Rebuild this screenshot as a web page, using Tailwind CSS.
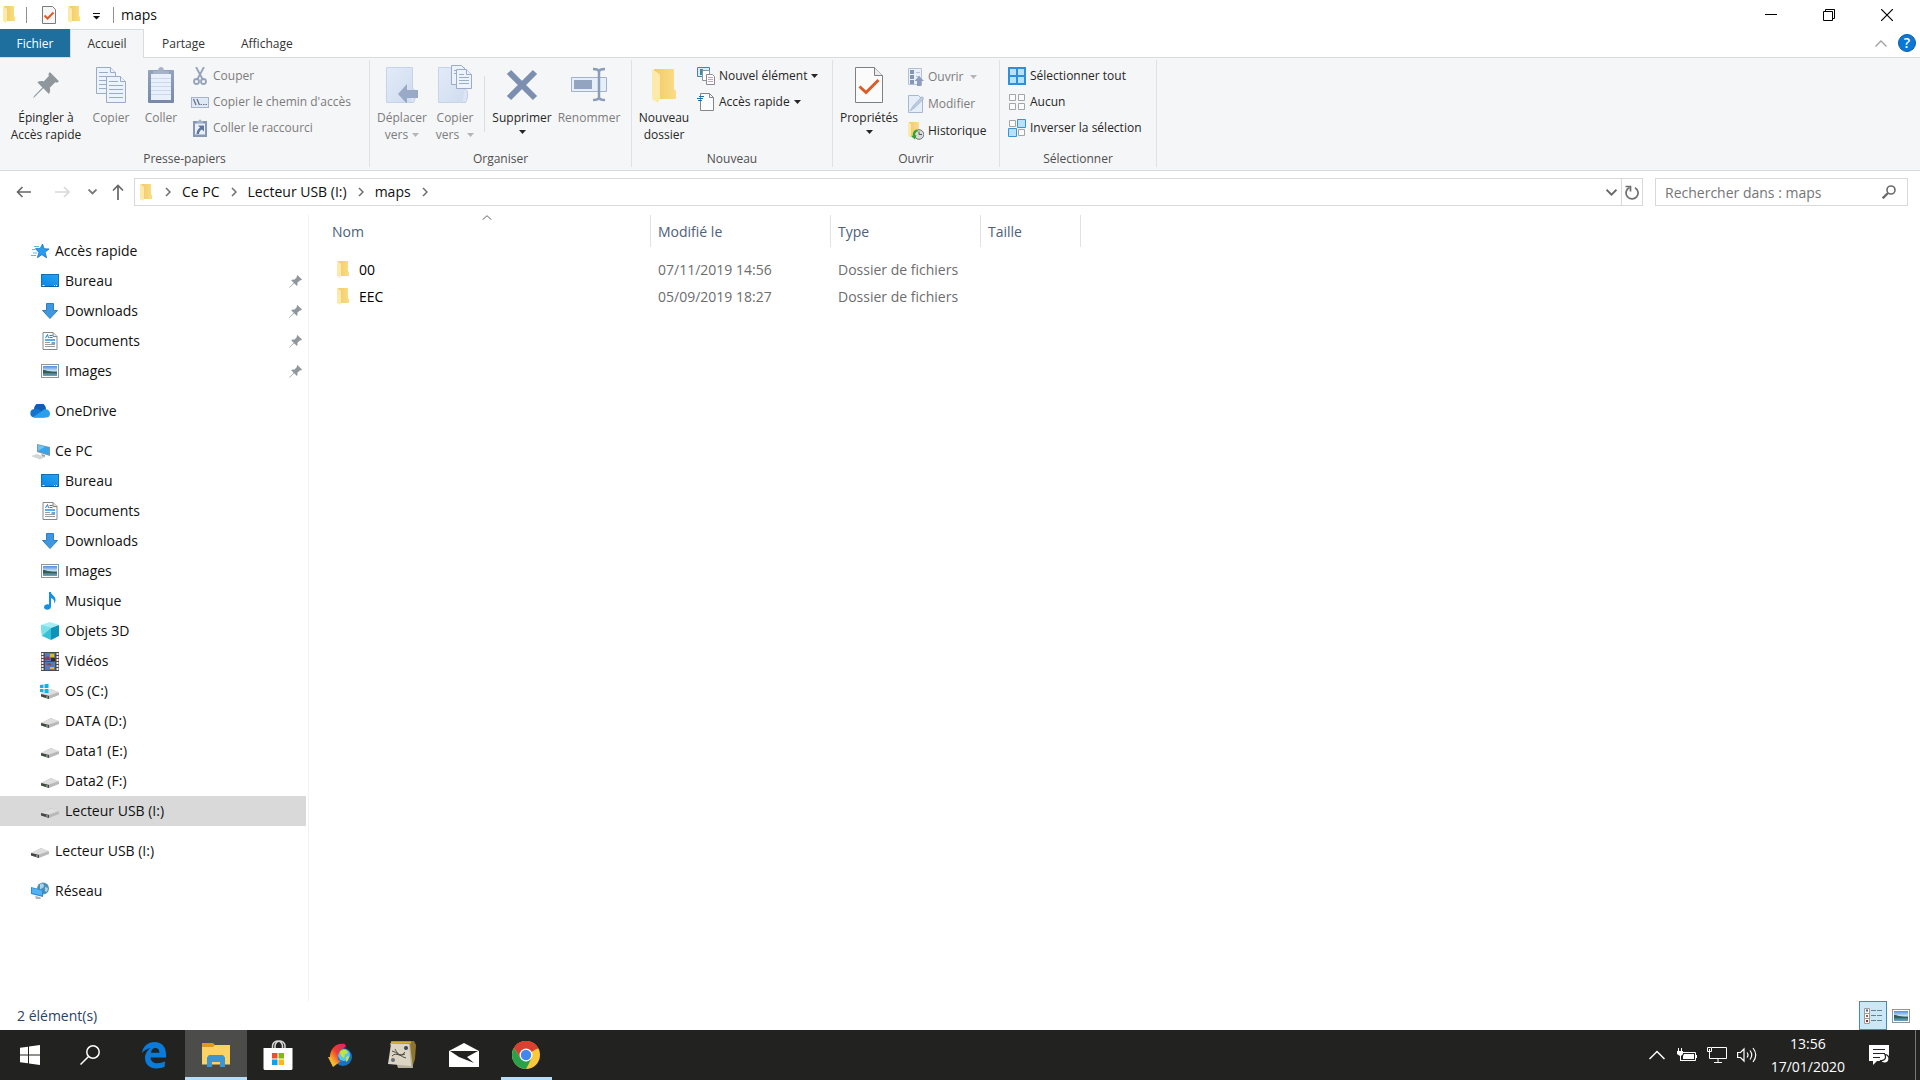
<!DOCTYPE html>
<html lang="fr">
  <head>
    <meta charset="UTF-8" />
    <meta name="viewport" content="width=device-width, initial-scale=1.0" />
    <script src="https://cdn.jsdelivr.net/npm/@tailwindcss/browser@4"></script>
    <title>maps</title>
  </head>
  <body class="flex min-h-screen flex-col bg-white font-['Open_Sans','Noto_Sans',sans-serif] text-sm text-[#111]">
    <!-- shared icons -->
    <svg class="absolute h-0 w-0" aria-hidden="true">
      <defs>
        <linearGradient id="gFolder" x1="0" x2="1"><stop offset="0" stop-color="#f0ca68" /><stop offset="1" stop-color="#fbdd85" /></linearGradient>
        <linearGradient id="gBlue" x1="0" y1="1" x2="1" y2="0"><stop offset="0" stop-color="#0a84e4" /><stop offset="1" stop-color="#22a6fb" /></linearGradient>
        <linearGradient id="gSky" x1="0" y1="0" x2="0" y2="1"><stop offset="0" stop-color="#4c8fe0" /><stop offset="0.5" stop-color="#cfe6f7" /><stop offset="0.6" stop-color="#3c6b62" /><stop offset="1" stop-color="#6ea3c9" /></linearGradient>
        <linearGradient id="gSteel" x1="0" y1="0" x2="0" y2="1"><stop offset="0" stop-color="#93a2bd" /><stop offset="1" stop-color="#7888a8" /></linearGradient>
        <linearGradient id="gPage" x1="0" y1="0" x2="1" y2="1"><stop offset="0" stop-color="#e3ebf8" /><stop offset="1" stop-color="#cfdcef" /></linearGradient>
        <linearGradient id="gArrow" x1="1" y1="0" x2="0" y2="1"><stop offset="0" stop-color="#d6246e" /><stop offset="0.45" stop-color="#ee3d2d" /><stop offset="0.75" stop-color="#f9b32a" /><stop offset="1" stop-color="#c4ec4c" /></linearGradient>
      </defs>
      <symbol id="folder" viewBox="0 0 12 17">
        <path d="M1 0h10v10l1 1v4H3z" fill="url(#gFolder)" />
        <path d="M0 0l3 2c1 .6 1 1 1 2v11l-1 2-3-2z" fill="#fde9a9" />
      </symbol>
      <symbol id="pin" viewBox="0 0 24 24">
        <path d="M15.500 0L24 8.500l-2 1.500-1.500-.5-5 5c.6 2.400.3 4.300-.8 5.800L9.500 15 1.500 23 0 24l1-1.800 7.700-7.900L4 9.500c1.700-1.200 3.700-1.400 5.800-.8l4.900-5-.5-1.700z" fill="#8f979d" />
      </symbol>
      <symbol id="desktop" viewBox="0 0 18 14">
        <rect x=".5" y=".5" width="17" height="12" fill="url(#gBlue)" stroke="#1170ba" />
        <path d="M1 12.500h16" stroke="#0b5fa5" /><path d="M1.500 11.500h2M13 11.500h1M15 11.500h1" stroke="#fff" />
      </symbol>
      <symbol id="download" viewBox="0 0 16 16">
        <path d="M4.500.5h7v7h4L8 15.500.5 7.500h4z" fill="#3f97e0" stroke="#2c7fc6" />
      </symbol>
      <symbol id="document" viewBox="0 0 15 18">
        <path d="M.5.500h10l4 4v13H.5z" fill="#fdfdfd" stroke="#85888b" /><path d="M10.500.5v4h4" fill="#dfe1e3" stroke="#85888b" />
        <path d="M3 6l2-3.500L6 6M7 3.500h3M7 5.500h3" stroke="#2a7fc4" fill="none" />
        <path d="M2.500 8h10M9 11h3.500" stroke="#2390e2" stroke-width="1.500" /><path d="M2.500 10.500h5M2.500 12.500h10M2.500 14.500h10" stroke="#9a9da0" />
      </symbol>
      <symbol id="picture" viewBox="0 0 18 14">
        <rect x=".5" y=".5" width="17" height="13" fill="#fff" stroke="#8d969e" />
        <rect x="2" y="2" width="14" height="10" fill="url(#gSky)" /><path d="M2 6c4 0 5 2 14 2v1H2z" fill="#335f55" />
      </symbol>
      <symbol id="drive" viewBox="0 0 18 10">
        <path d="M0 5l10-5 8 3.500V6L8 10 0 7.500z" fill="#b9b9b9" /><path d="M0 5l10-4.800L18 3 8 6.500z" fill="#dedede" />
        <path d="M0 5l8 2v3L0 7.500z" fill="#454745" /><path d="M5 8h2" stroke="#9fd29a" />
      </symbol>
      <symbol id="crumb" viewBox="0 0 6 10"><path d="M1 1l4 4-4 4" fill="none" stroke="#6d6d6d" stroke-width="1.500" /></symbol>
      <symbol id="caret" viewBox="0 0 7 4"><path d="M0 0h7L3.500 4z" fill="currentColor" /></symbol>
      <symbol id="check" viewBox="0 0 28 36">
        <path d="M.5.500h19l8 8v27H.5z" fill="#fbfbfb" stroke="#7f8285" /><path d="M19.500.5v8h8" fill="#e9ebec" stroke="#7f8285" />
        <path d="M4.500 19.500l6.500 6L23.500 13" fill="none" stroke="#df5b26" stroke-width="3" />
      </symbol>
    </svg>

    <!-- title bar -->
    <header class="flex h-[29px] items-center">
      <svg class="ml-[3px] h-[17px] w-3"><use href="#folder" /></svg>
      <span class="ml-[11px] h-4 w-px bg-[#8f8f8f]"></span>
      <button class="ml-[15px]" aria-label="Propriétés">
        <svg class="h-[18px] w-[14px]" viewBox="0 0 14 18"><path d="M.5.500h10l3 3v14H.5z" fill="#f6f6f6" stroke="#777b80" /><path d="M2.500 9.500l3 3 6-6" fill="none" stroke="#df5b26" stroke-width="2" /></svg>
      </button>
      <button class="ml-3" aria-label="Nouveau dossier"><svg class="h-[17px] w-3"><use href="#folder" /></svg></button>
      <button class="ml-[13px]" aria-label="Personnaliser"><svg class="mt-1 h-[7px] w-[7px]" viewBox="0 0 7 7"><path d="M0 .5h7" stroke="#111" /><path d="M0 3h7L3.500 6.500z" fill="#111" /></svg></button>
      <span class="ml-[13px] h-4 w-px bg-[#8f8f8f]"></span>
      <h1 class="ml-[7px]">maps</h1>
      <div class="ml-auto flex">
        <button class="flex h-[29px] w-[58px] items-center justify-center" aria-label="Réduire"><svg class="h-3 w-3" viewBox="0 0 12 12"><path d="M0 5.500h12" stroke="#000" /></svg></button>
        <button class="flex h-[29px] w-[58px] items-center justify-center" aria-label="Restaurer"><svg class="h-3 w-3" viewBox="0 0 12 12"><path d="M.5 2.500h9v9h-9zM2.500 2.500v-2h9v9h-2" fill="none" stroke="#000" /></svg></button>
        <button class="mr-1 flex h-[29px] w-[58px] items-center justify-center" aria-label="Fermer"><svg class="h-3 w-3" viewBox="0 0 12 12"><path d="M0 0l12 12M12 0L0 12" stroke="#000" stroke-width="1.200" /></svg></button>
      </div>
    </header>

    <!-- tabs -->
    <nav class="flex h-7 text-xs text-[#333]">
      <button class="w-[70px] bg-[#1e6e9e] pt-0.5 text-white">Fichier</button>
      <button class="relative -mb-px w-[74px] border border-b-0 border-[#dadbdc] bg-[#f5f6f7]">Accueil</button>
      <button class="px-[18px] pt-0.5">Partage</button>
      <button class="px-[18px] pt-0.5">Affichage</button>
      <button class="ml-auto" aria-label="Réduire le ruban"><svg class="h-[7px] w-3" viewBox="0 0 12 7"><path d="M.5 6.500L6 1l5.500 5.500" fill="none" stroke="#a0a0a0" stroke-width="1.300" /></svg></button>
      <button class="mr-1 ml-[11px] flex h-[18px] w-[18px] items-center justify-center self-center rounded-full border border-[#0a5ea8] bg-[#0b77d6] text-sm font-semibold text-white" aria-label="Aide">?</button>
    </nav>

    <!-- ribbon -->
    <section class="flex h-[114px] border-y border-[#dadbdc] bg-[#f5f6f7] pt-0.5 pb-[3px] text-xs text-[#262626]">
      <div class="flex w-[370px] flex-col border-r border-[#e0e1e3]">
        <div class="flex flex-1 pl-[5px]">
          <button class="flex w-[82px] flex-col items-center leading-[17px]">
            <svg class="mt-3 mb-[11px] h-[26px] w-[26px]"><use href="#pin" /></svg>Épingler à<br />Accès rapide
          </button>
          <button class="flex w-12 flex-col items-center leading-[17px] text-[#7c7c7c]" disabled>
            <svg class="mt-[7px] mb-[6px] h-9 w-[30px]" viewBox="0 0 30 36">
              <g fill="#edf3fc" stroke="#9aabc8">
                <path d="M.5.500h14l5 5v21H.5z" /><path d="M14.500.5v5h5M3 5.500h9M3 9.500h14M3 13.500h14M3 17.500h14M3 21.500h14" />
                <path d="M10.500 9.500h14l5 5v21h-19z" /><path d="M24.500 9.500v5h5M13 14.500h9M13 18.500h14M13 22.500h14M13 26.500h14M13 30.500h14" />
              </g>
            </svg>Copier
          </button>
          <button class="flex w-[52px] flex-col items-center leading-[17px] text-[#7c7c7c]" disabled>
            <svg class="mt-[7px] mb-[6px] h-9 w-[26px]" viewBox="0 0 26 36">
              <rect y="3" width="26" height="33" rx="1" fill="url(#gSteel)" /><path d="M3 7h20v26H3z" fill="#e8f0fb" />
              <path d="M3 11.500h20M3 15.500h20M3 19.500h20M3 23.500h20M3 27.500h20" stroke="#cbd7ea" />
              <path d="M5 7V4h5a3 3 0 016 0h5v3z" fill="#a6b2c8" /><circle cx="13" cy="2.500" r="2.500" fill="#a6b2c8" />
            </svg>Coller
          </button>
          <div class="ml-1 flex flex-col pt-[3px] text-[#7c7c7c]">
            <button class="flex h-[26px] items-center gap-1" disabled>
              <svg class="h-[18px] w-[18px]" viewBox="0 0 18 18" fill="none" stroke="#94a2bc" stroke-width="1.800"><path d="M5 0l6.500 12M13 0L6.500 12" /><circle cx="5.500" cy="14.500" r="2.500" /><circle cx="12.500" cy="14.500" r="2.500" /></svg>Couper
            </button>
            <button class="flex h-[26px] items-center gap-1" disabled>
              <svg class="h-[18px] w-[18px]" viewBox="0 0 18 18"><rect x=".5" y="4.500" width="17" height="10" fill="#dfe8f5" stroke="#a5b3cb" /><path d="M2.500 6l2.500 6M6 6l2.500 6" stroke="#67738c" stroke-width="1.300" /><path d="M9.500 11.500h1.500M12 11.500h1.500M14.500 11.500H16" stroke="#67738c" /></svg>Copier le chemin d'accès
            </button>
            <button class="flex h-[26px] items-center gap-1" disabled>
              <svg class="h-[18px] w-[18px]" viewBox="0 0 18 18"><path d="M2 2h14v16H2z" fill="#8798b6" /><path d="M4 4.500h10v11H4z" fill="#eaf1fb" /><path d="M6 4V2h1.500a1.500 1.500 0 013 0H12v2z" fill="#a6b2c8" /><path d="M7 6.500h6v6l-2-2c-2 1-3 2.500-3 4.500H5.500c0-3 1.500-5 3.500-6.500z" fill="#60759c" /></svg>Coller le raccourci
            </button>
          </div>
        </div>
        <div class="h-4 text-center text-[#4f4f4f]">Presse-papiers</div>
      </div>

      <div class="flex w-[262px] flex-col border-r border-[#e0e1e3]">
        <div class="flex flex-1 pl-[3px]">
          <button class="flex w-[58px] flex-col items-center leading-[17px] text-[#7c7c7c]" disabled>
            <svg class="mt-[7px] mb-[6px] h-9 w-8" viewBox="0 0 32 36">
              <path d="M.5.500h26v35H.5z" fill="url(#gPage)" stroke="#c6d4ea" /><path d="M26.500 22c4 0 4 8 1 13.500h-3" fill="#dbe5f4" stroke="#c0cfe6" />
              <path d="M12 27l9-10v6h11v8H21v6z" fill="#9aa9c5" />
            </svg>Déplacer
            <span class="flex items-center gap-1">vers<svg class="h-1 w-[7px] text-[#b5b5b5]"><use href="#caret" /></svg></span>
          </button>
          <button class="flex w-12 flex-col items-center leading-[17px] text-[#7c7c7c]" disabled>
            <svg class="mt-[5px] mb-[6px] h-[38px] w-[34px]" viewBox="0 0 34 38">
              <path d="M.5 2.500h26v35H.5z" fill="url(#gPage)" stroke="#c6d4ea" /><path d="M26.500 24c4 0 4 8 1 13.500h-3" fill="#dbe5f4" stroke="#c0cfe6" />
              <g fill="#edf3fc" stroke="#9aabc8"><path d="M13.500.5h10l4 4v15h-14zM16 5.500h8M16 8.500h8" /><path d="M18.500 4.500h10l5 5v14h-15z" /><path d="M28.500 4.500v5h5M21 9.500h5M21 12.500h10M21 15.500h10M21 18.500h10" /></g>
            </svg>Copier
            <span class="flex items-center gap-2">vers<svg class="h-1 w-[7px] text-[#b5b5b5]"><use href="#caret" /></svg></span>
          </button>
          <span class="mx-[5px] mt-4 h-14 w-px bg-[#dcdde0]"></span>
          <button class="flex w-16 flex-col items-center leading-[17px]">
            <svg class="mt-[9px] mb-2 h-8 w-8" viewBox="0 0 32 32"><path d="M3 3l26 26M29 3L3 29" stroke="#7d8fb0" stroke-width="6" /></svg>Supprimer
            <svg class="mt-1 h-1 w-[7px]"><use href="#caret" /></svg>
          </button>
          <button class="flex w-[70px] flex-col items-center leading-[17px] text-[#7c7c7c]" disabled>
            <svg class="mt-[7px] mb-[6px] h-9 w-9" viewBox="0 0 36 36"><path d="M.5 10.500h35v14H.5z" fill="#e6eefa" stroke="#a2b1cc" /><path d="M3 13h18v9H3z" fill="#93a4c1" /><path d="M22 2c3 0 6 0 6 3v25c0 3-3 3-6 3M34 2c-3 0-6 0-6 3v25c0 3 3 3 6 3" fill="none" stroke="#8b9cba" stroke-width="2.500" /></svg>Renommer
          </button>
        </div>
        <div class="h-4 text-center text-[#4f4f4f]">Organiser</div>
      </div>

      <div class="flex w-[201px] flex-col border-r border-[#e0e1e3]">
        <div class="flex flex-1 pl-[3px]">
          <button class="flex w-[58px] flex-col items-center leading-[17px]">
            <svg class="mt-[9px] mb-[6px] h-[34px] w-6"><use href="#folder" /></svg>Nouveau<br />dossier
          </button>
          <div class="ml-1 flex flex-col pt-[3px]">
            <button class="flex h-[26px] items-center gap-1">
              <svg class="h-[18px] w-[18px]" viewBox="0 0 18 18"><path d="M.5.500h12v9H.5z" fill="#d6edf8" stroke="#4686a8" /><path d="M3 2h3v6H3z" fill="#3f8aa8" /><path d="M5.500 3.500h7v10h-7z" fill="#fff" stroke="#8795a2" /><path d="M9.500 7.500h6l2 2v8h-8z" fill="#fff" stroke="#8b8b98" /><path d="M11 10.500h5M11 12.500h5M11 14.500h5" stroke="#c8a5b0" /></svg>Nouvel élément<svg class="h-1 w-[7px]"><use href="#caret" /></svg>
            </button>
            <button class="flex h-[26px] items-center gap-1">
              <svg class="h-[18px] w-[18px]" viewBox="0 0 18 18"><path d="M3.500.5h9l4 4v13h-13z" fill="#fcfcfc" stroke="#84878a" /><path d="M12.500.5v4h4" fill="none" stroke="#84878a" /><path d="M2 3.500h5M0 5.500h6M1 7.500h4" stroke="#1e70a8" stroke-width="1.200" /></svg>Accès rapide<svg class="h-1 w-[7px]"><use href="#caret" /></svg>
            </button>
          </div>
        </div>
        <div class="h-4 text-center text-[#4f4f4f]">Nouveau</div>
      </div>

      <div class="flex w-[167px] flex-col border-r border-[#e0e1e3]">
        <div class="flex flex-1 pl-[3px]">
          <button class="flex w-[66px] flex-col items-center leading-[17px]">
            <svg class="mt-[7px] mb-[6px] h-9 w-7"><use href="#check" /></svg>Propriétés
            <svg class="mt-1 h-1 w-[7px]"><use href="#caret" /></svg>
          </button>
          <div class="ml-[6px] flex flex-col pt-[3px]">
            <button class="flex h-[27px] items-center gap-1 text-[#7c7c7c]" disabled>
              <svg class="h-[18px] w-4" viewBox="0 0 16 18"><path d="M.5.500h13v16H.5z" fill="#e9f0fa" stroke="#b3c1d8" /><path d="M2 2h4v4H2zM2 7h4v4H2zM2 12h4v4H2z" fill="#8496b5" /><path d="M8 4.500h4M8 8.500h4" stroke="#b7c4da" /><path d="M6.500 13L11 8l5 5h-2.500v5H9v-5z" fill="#8d9dbb" /></svg>Ouvrir<svg class="ml-0.5 h-1 w-[7px] text-[#b5b5b5]"><use href="#caret" /></svg>
            </button>
            <button class="flex h-[27px] items-center gap-1 text-[#7c7c7c]" disabled>
              <svg class="h-[18px] w-4" viewBox="0 0 16 18"><path d="M.5.500h10l4 4v13H.5z" fill="#e6eefa" stroke="#a8b7d0" /><path d="M2 16l3-5L14 1.500l2 2-9 9z" fill="#bccbe1" stroke="#a1b1cb" stroke-width=".7" /></svg>Modifier
            </button>
            <button class="flex h-[27px] items-center gap-1">
              <svg class="h-[18px] w-4" viewBox="0 0 16 18"><path d="M1 0h10v14H3z" fill="url(#gFolder)" /><path d="M0 0l3 2v14l-3-2z" fill="#fde9a9" /><circle cx="11" cy="12.500" r="4.800" fill="#d8dadb" stroke="#6f7376" /><path d="M11 9.500v3h3" fill="none" stroke="#555" /><path d="M9 7.500c-3 .5-4.500 3-4 6l-2 .5 4 3.500 1.500-4.500-1.500.3c0-2 1-3.500 3-4z" fill="#2fa62b" /></svg>Historique
            </button>
          </div>
        </div>
        <div class="h-4 text-center text-[#4f4f4f]">Ouvrir</div>
      </div>

      <div class="flex w-[157px] flex-col border-r border-[#e0e1e3]">
        <div class="flex flex-1 flex-col pt-[3px] pl-2">
          <button class="flex h-[26px] items-center gap-1">
            <svg class="h-[18px] w-[18px]" viewBox="0 0 18 18"><path d="M1 1h16v16H1z" fill="#b8e2fb" stroke="#2f8fd8" stroke-width="2" /><path d="M9 0v18M0 9h18" stroke="#2f8fd8" stroke-width="2" /></svg>Sélectionner tout
          </button>
          <button class="flex h-[26px] items-center gap-1">
            <svg class="h-[18px] w-[18px]" viewBox="0 0 18 18" fill="#fbfbfb" stroke="#a5a5a5"><path d="M1.500 1.500h6v6h-6zM10.500 1.500h6v6h-6zM1.500 10.500h6v6h-6zM10.500 10.500h6v6h-6z" /></svg>Aucun
          </button>
          <button class="flex h-[26px] items-center gap-1">
            <svg class="h-[18px] w-[18px]" viewBox="0 0 18 18"><path d="M1.500 1.500h6v6h-6zM10.500 10.500h6v6h-6z" fill="#fbfbfb" stroke="#a5a5a5" /><path d="M9.500.5h8v8h-8zM.5 9.500h8v8h-8z" fill="#b8e2fb" stroke="#3993d5" /></svg>Inverser la sélection
          </button>
        </div>
        <div class="h-4 text-center text-[#4f4f4f]">Sélectionner</div>
      </div>
    </section>

    <!-- address bar -->
    <section class="flex h-11 items-center pr-3 pb-0.5 pl-4">
      <button aria-label="Précédent"><svg class="h-3 w-4" viewBox="0 0 16 12" fill="none" stroke="#666" stroke-width="1.600"><path d="M15 6H1.500M6.500 1l-5 5 5 5" /></svg></button>
      <button class="ml-[23px]" aria-label="Suivant" disabled><svg class="h-3 w-4" viewBox="0 0 16 12" fill="none" stroke="#d8d8d8" stroke-width="1.600"><path d="M0 6h14M9 1l5 5-5 5" /></svg></button>
      <button class="ml-[17px]" aria-label="Emplacements récents"><svg class="h-[6px] w-[9px]" viewBox="0 0 9 6" fill="none" stroke="#777" stroke-width="1.800"><path d="M.5.500l4 4 4-4" /></svg></button>
      <button class="ml-[15px]" aria-label="Dossier parent"><svg class="h-4 w-3" viewBox="0 0 12 16" fill="none" stroke="#666" stroke-width="1.700"><path d="M6 16V1.500M1 6.500l5-5 5 5" /></svg></button>
      <nav class="ml-[10px] flex h-7 flex-1 items-center border border-[#d9d9d9] pl-[5px]" aria-label="Chemin">
        <svg class="h-[17px] w-3"><use href="#folder" /></svg>
        <svg class="mr-[11px] ml-[13px] h-[10px] w-[6px]"><use href="#crumb" /></svg>
        <a href="#">Ce PC</a>
        <svg class="mx-[11px] h-[10px] w-[6px]"><use href="#crumb" /></svg>
        <a href="#">Lecteur USB (I:)</a>
        <svg class="mx-[11px] h-[10px] w-[6px]"><use href="#crumb" /></svg>
        <a href="#">maps</a>
        <svg class="mx-[11px] h-[10px] w-[6px]"><use href="#crumb" /></svg>
        <button class="mr-1 ml-auto" aria-label="Emplacements précédents"><svg class="h-[7px] w-[11px]" viewBox="0 0 11 7" fill="none" stroke="#666" stroke-width="1.800"><path d="M.5.700l5 5 5-5" /></svg></button>
        <button class="flex h-full w-[21px] items-center justify-center border-l border-[#d9d9d9]" aria-label="Actualiser"><svg class="h-[15px] w-[14px]" viewBox="0 0 14 15" fill="none" stroke="#6f6f6f" stroke-width="1.700"><path d="M4.500 2.500A6 6 0 1010 2.700" /><path d="M.5 1.500h5v5" /></svg></button>
      </nav>
      <form class="ml-3 flex h-7 w-[253px] items-center border border-[#d9d9d9] pr-[11px] pl-[9px]">
        <label for="search" class="sr-only">Rechercher</label>
        <input id="search" type="text" placeholder="Rechercher dans : maps" class="h-full min-w-0 flex-1 outline-none placeholder:text-[#757575]" />
        <button type="button" aria-label="Rechercher"><svg class="h-[14px] w-[14px]" viewBox="0 0 14 14" fill="none" stroke="#6a6a6a"><circle cx="9" cy="5" r="4" stroke-width="1.600" /><path d="M6 8L.7 13.300" stroke-width="2.400" /></svg></button>
      </form>
    </section>

    <main class="flex flex-1">
      <!-- navigation pane -->
      <nav class="flex w-[309px] flex-col gap-[10px] border-r border-[#f2f2f2] pt-[21px] pr-0.5">
        <div>
          <a href="#" class="flex h-[30px] items-center gap-[5px] pl-[31px]">
            <svg class="h-[18px] w-[19px]" viewBox="0 0 19 18"><path d="M11.500 2l1.600 4.700 5 .3-4 3.200 1.500 5.600-4.700-3.100-4.500 3 1.500-5.300-3.500-3.700 5-.5z" fill="#2a9cf0" stroke="#1a75c0" stroke-width=".8" /><path d="M3 4.500h5M1 7.500h3M2 11h4M0 13.500h5" stroke="#62b5ee" /></svg>Accès rapide
          </a>
          <a href="#" class="flex h-[30px] items-center gap-[6px] pr-1 pl-[41px]"><svg class="h-[14px] w-[18px]"><use href="#desktop" /></svg><span class="flex-1">Bureau</span><svg class="h-[13px] w-[13px]"><use href="#pin" /></svg></a>
          <a href="#" class="flex h-[30px] items-center gap-[6px] pr-1 pl-[41px]"><svg class="h-4 w-[18px]"><use href="#download" /></svg><span class="flex-1">Downloads</span><svg class="h-[13px] w-[13px]"><use href="#pin" /></svg></a>
          <a href="#" class="flex h-[30px] items-center gap-[6px] pr-1 pl-[41px]"><svg class="h-[18px] w-[18px]"><use href="#document" /></svg><span class="flex-1">Documents</span><svg class="h-[13px] w-[13px]"><use href="#pin" /></svg></a>
          <a href="#" class="flex h-[30px] items-center gap-[6px] pr-1 pl-[41px]"><svg class="h-[14px] w-[18px]"><use href="#picture" /></svg><span class="flex-1">Images</span><svg class="h-[13px] w-[13px]"><use href="#pin" /></svg></a>
        </div>
        <a href="#" class="flex h-[30px] items-center gap-[5px] pl-[30px]">
          <svg class="h-[14px] w-5" viewBox="0 0 20 14"><path d="M4 5a6 6 0 0112 0l-1 5H5z" fill="#0d5fb4" /><path d="M4 13.500A4.300 4.300 0 014 5c3-.5 5 .5 7 2l4 6.500z" fill="#1374cf" /><path d="M3 13l9-6c3-3.500 8-1.500 8 2.500 0 3-2 4-3.500 4H4z" fill="#2a9fea" /></svg>OneDrive
        </a>
        <div>
          <a href="#" class="flex h-[30px] items-center gap-[5px] pl-[31px]">
            <svg class="h-[17px] w-[19px]" viewBox="0 0 19 17"><path d="M6 1l13 3v9L6 9z" fill="#7b97ac" /><path d="M7 2l11 2.700v7L7 8z" fill="#36a3ea" /><path d="M7 2l7 1.700L7 8z" fill="#71c3f5" /><path d="M0 13l6-2 8 3-5 2.500z" fill="#d4d6d7" /><path d="M10 11l4 1v2l-3-1z" fill="#9aa5ac" /></svg>Ce PC
          </a>
          <a href="#" class="flex h-[30px] items-center gap-[6px] pl-[41px]"><svg class="h-[14px] w-[18px]"><use href="#desktop" /></svg>Bureau</a>
          <a href="#" class="flex h-[30px] items-center gap-[6px] pl-[41px]"><svg class="h-[18px] w-[18px]"><use href="#document" /></svg>Documents</a>
          <a href="#" class="flex h-[30px] items-center gap-[6px] pl-[41px]"><svg class="h-4 w-[18px]"><use href="#download" /></svg>Downloads</a>
          <a href="#" class="flex h-[30px] items-center gap-[6px] pl-[41px]"><svg class="h-[14px] w-[18px]"><use href="#picture" /></svg>Images</a>
          <a href="#" class="flex h-[30px] items-center gap-[6px] pl-[41px]"><svg class="h-[18px] w-[18px]" viewBox="0 0 18 18"><path d="M8 0h2c0 3 5 4 4.500 8.500-.2 1.500-1 2.500-1.500 3 .8-3-.5-4.500-3-5.500v8.500c0 4-7 4.200-7 .8 0-2.500 3-3.500 5-2.600z" fill="#1590e8" /></svg>Musique</a>
          <a href="#" class="flex h-[30px] items-center gap-[6px] pl-[41px]"><svg class="h-[18px] w-[18px]" viewBox="0 0 18 18"><path d="M0 3l9-3 9 3-8 3z" fill="#a7ecf2" /><path d="M0 3l10 3v12l-9-4z" fill="#37c2d4" /><path d="M10 6l8-3v11l-8 4z" fill="#0f93b8" /><path d="M0 3l10 3-9 8z" fill="#7be0e8" /></svg>Objets 3D</a>
          <a href="#" class="flex h-[30px] items-center gap-[6px] pl-[41px]"><svg class="h-[19px] w-[18px]" viewBox="0 0 18 19"><path d="M0 0h18v19H0z" fill="#4b4b4b" /><path d="M1.500 1v18M16.500 1v18" stroke="#f0f0f0" stroke-width="2" stroke-dasharray="2 1" /><path d="M4 1h10v8H4zM4 10h10v8H4z" fill="#5b78c4" /><path d="M9 2h4v3H9zM9 15h4v2H9z" fill="#e0b72a" /><path d="M4 6l3-2 3 4H4zM4 12l5-1 2 3z" fill="#9c3b32" /><path d="M10 6h4v3h-4z" fill="#2b2f28" /></svg>Vidéos</a>
          <a href="#" class="flex h-[30px] items-center gap-[6px] pl-[40px]"><svg class="h-[17px] w-[19px]" viewBox="0 0 19 17"><use href="#drive" x="1" y="6" width="18" height="10" /><path d="M0 2l3.500-.5V5H0zM4.500 1.300L8.500.7V5h-4zM0 6h3.500v3.500L0 9zM4.500 6h4v4.300l-4-.6z" fill="#10b2e8" /></svg>OS (C:)</a>
          <a href="#" class="flex h-[30px] items-center gap-[6px] pl-[41px]"><svg class="mt-1 h-[10px] w-[18px]"><use href="#drive" /></svg>DATA (D:)</a>
          <a href="#" class="flex h-[30px] items-center gap-[6px] pl-[41px]"><svg class="mt-1 h-[10px] w-[18px]"><use href="#drive" /></svg>Data1 (E:)</a>
          <a href="#" class="flex h-[30px] items-center gap-[6px] pl-[41px]"><svg class="mt-1 h-[10px] w-[18px]"><use href="#drive" /></svg>Data2 (F:)</a>
          <a href="#" class="flex h-[30px] items-center gap-[6px] bg-[#d9d9d9] pl-[41px]" aria-current="page"><svg class="mt-1 h-[10px] w-[18px]"><use href="#drive" /></svg>Lecteur USB (I:)</a>
        </div>
        <a href="#" class="flex h-[30px] items-center gap-[6px] pl-[31px]"><svg class="mt-1 h-[10px] w-[18px]"><use href="#drive" /></svg>Lecteur USB (I:)</a>
        <a href="#" class="flex h-[30px] items-center gap-[6px] pl-[31px]">
          <svg class="h-[18px] w-[18px]" viewBox="0 0 18 18"><circle cx="12" cy="6.500" r="6" fill="#4f8fb4" /><path d="M9 2c2-1 4 0 4 2s-3 2-4 4zM14 5l3 1-1 4-2-1z" fill="#a9d3e6" /><path d="M0 5l12 3v7L0 12z" fill="#2b8bd8" /><path d="M1 6l10 2.500v5L1 11z" fill="#52b1f2" /><path d="M4 14l5 1 1 2H5z" fill="#a9b5bd" /></svg>Réseau
        </a>
      </nav>

      <!-- file list -->
      <section class="flex-1">
        <table class="w-[772px] table-fixed text-left">
          <colgroup><col class="w-[342px]" /><col class="w-[180px]" /><col class="w-[150px]" /><col class="w-[100px]" /></colgroup>
          <thead class="text-[#4c607a]">
            <tr class="h-[41px] align-top">
              <th class="p-0 font-normal"><div class="relative flex h-8 items-center border-r border-[#e2e2e2] pt-0.5 pl-[23px]">Nom
                <svg class="absolute top-0 left-[173px] h-[5px] w-[10px]" viewBox="0 0 10 5"><path d="M.5 4.800L5 .7l4.500 4.100" fill="none" stroke="#666" /></svg></div></th>
              <th class="p-0 font-normal"><div class="flex h-8 items-center border-r border-[#e2e2e2] pt-0.5 pl-[7px]">Modifié le</div></th>
              <th class="p-0 font-normal"><div class="flex h-8 items-center border-r border-[#e2e2e2] pt-0.5 pl-[7px]">Type</div></th>
              <th class="p-0 font-normal"><div class="flex h-8 items-center border-r border-[#e2e2e2] pt-0.5 pl-[7px]">Taille</div></th>
            </tr>
          </thead>
          <tbody class="text-[#6d6d6d]">
            <tr class="h-[27px]">
              <td class="p-0 text-black"><a href="#" class="flex items-center gap-[10px] pl-7"><svg class="h-[17px] w-3"><use href="#folder" /></svg>00</a></td>
              <td class="py-0 pr-0 pl-[7px]">07/11/2019 14:56</td>
              <td class="py-0 pr-0 pl-[7px]">Dossier de fichiers</td>
              <td></td>
            </tr>
            <tr class="h-[27px]">
              <td class="p-0 text-black"><a href="#" class="flex items-center gap-[10px] pl-7"><svg class="h-[17px] w-3"><use href="#folder" /></svg>EEC</a></td>
              <td class="py-0 pr-0 pl-[7px]">05/09/2019 18:27</td>
              <td class="py-0 pr-0 pl-[7px]">Dossier de fichiers</td>
              <td></td>
            </tr>
          </tbody>
        </table>
      </section>
    </main>

    <!-- status bar -->
    <footer class="flex h-[29px] items-center pr-[10px] pl-[17px] text-[#2b4263]">
      <span>2 élément(s)</span>
      <button class="ml-auto flex h-[29px] w-7 items-center justify-center border border-[#3c8fba] bg-[#cbe8f6]" aria-label="Détails">
        <svg class="h-4 w-[18px]" viewBox="0 0 18 16"><path d="M.5.500h5v15h-5zM.5 5.500h5M.5 10.500h5" fill="#fff" stroke="#a39a92" /><path d="M2 2.500h2" stroke="#37639a" stroke-width="2" /><path d="M2 8h2" stroke="#8a6a52" stroke-width="2" /><path d="M2 13h2" stroke="#a22c2c" stroke-width="2" /><path d="M7 2.500h5M13 2.500h5M7 7.500h5M13 7.500h5M7 12.500h5M13 12.500h5" stroke="#6b7f8c" /></svg>
      </button>
      <button class="ml-[5px]" aria-label="Grandes icônes"><svg class="h-[14px] w-[18px]"><use href="#picture" /></svg></button>
    </footer>

    <!-- taskbar -->
    <footer class="flex h-[50px] bg-[#222220] text-white">
      <button class="flex w-[60px] items-center justify-center" aria-label="Démarrer"><svg class="h-5 w-5" viewBox="0 0 20 20"><path d="M0 2.800L8 1.700V9.500H0zM9 1.500L20 0v9.500H9zM0 10.500h8v7.800l-8-1.100zM9 10.500h11V20L9 18.500z" fill="#fff" /></svg></button>
      <button class="flex w-[60px] items-center justify-center" aria-label="Rechercher"><svg class="h-5 w-5" viewBox="0 0 20 20" fill="none" stroke="#fff" stroke-width="1.500"><circle cx="13" cy="7" r="6.200" /><path d="M8.500 11.500L.5 19.500" /></svg></button>
      <button class="ml-[3px] flex w-[62px] items-center justify-center" aria-label="Edge"><svg class="h-7 w-6" viewBox="0 0 24 28"><path d="M0 12C1 5 6 1 12.500 1 20 1 24 6.500 24 13v3.500H8.500C8.700 20.500 12 22.300 15.500 22.300c2.700 0 5.200-.7 7.300-2v5.300C20.500 27 17.500 27.500 14.500 27.500 7.500 27.500 3 23 3 17c0-4.500 2.500-8 6-10C5 7.500 2 9.500 0 12zM9 11.800h8.500C17.500 8.500 15.800 7 13.300 7 11 7 9.300 8.800 9 11.800z" fill="#0a7bd8" /></svg></button>
      <button class="flex w-[62px] items-center justify-center border-b-3 border-[#b5dcf9] bg-[#4c4c4a] pt-[3px]" aria-label="Explorateur de fichiers"><svg class="h-6 w-7" viewBox="0 0 28 24"><path d="M0 0h11l2 2h14v5H0z" fill="#dd9a1e" /><path d="M0 4h11l2-2h15v19.500H0z" fill="#fbd364" /><path d="M5 24v-9.500l2-2.500h14l2 2.500V24h-5v-5h-8v5z" fill="#3d96d4" /></svg></button>
      <button class="flex w-[62px] items-center justify-center" aria-label="Store"><svg class="h-[30px] w-[30px]" viewBox="0 0 30 30"><path d="M9.500 9V6a5 5 0 0110 0v3M12 9V6a5 5 0 0110 0v3" fill="none" stroke="#d8d8d8" stroke-width="1.500" /><path d="M.5 8h29v21l-1 1h-27l-1-1z" fill="#fff" /><path d="M9 13h5.500v5.500H9z" fill="#f04f23" /><path d="M15.500 13H21v5.500h-5.500z" fill="#7fbb08" /><path d="M9 19.500h5.500V25H9z" fill="#06a3ee" /><path d="M15.500 19.500H21V25h-5.500z" fill="#fdb813" /></svg></button>
      <button class="flex w-[62px] items-center justify-center" aria-label="Téléchargement">
        <svg class="h-6 w-6" viewBox="0 0 24 24"><circle cx="15" cy="14" r="9" fill="#1672c4" /><circle cx="16" cy="12" r="6" fill="#5cc3ea" /><path d="M12 9c1-2 4-2.500 6-2l2 3-3 1-1 4-3-2zM18 14l3-1c0 3-1 5-3 6z" fill="#c5e338" /><path d="M17 1C8-1 2 6 2 14H0l5 10 8-6-3-1C9 11 12 6 18 4z" fill="url(#gArrow)" /></svg>
      </button>
      <button class="flex w-[62px] items-center justify-center" aria-label="Cartes"><svg class="h-7 w-7" viewBox="0 0 28 28"><path d="M3 0h23l2 4-1 14-3 9z" fill="#8d762c" /><path d="M2 2l20 1 3 24H10z" fill="#b6b09d" /><path d="M3 3h18l2 22L0 23z" fill="#dcd5c3" /><path d="M3 1.500h20" stroke="#d3b23d" stroke-width="2" /><path d="M4 10c5 1 9 6 14 7M4 15c5-5 8 3 13-4M7 8c2 4 4 8 10 5" fill="none" stroke="#4b4c44" /><circle cx="18" cy="7" r="2" fill="#35465a" /><circle cx="5" cy="19" r="2" fill="#66707a" /></svg></button>
      <button class="flex w-[62px] items-center justify-center" aria-label="Courrier"><svg class="h-6 w-[30px]" viewBox="0 0 30 24"><path d="M0 8l15-8 15 8v16H0z" fill="#fff" /><path d="M1 8h28l-11 6 7 6L10 14z" fill="#222220" /></svg></button>
      <button class="flex w-[62px] flex-col items-center" aria-label="Chrome">
        <svg class="mt-[11px] h-7 w-7" viewBox="0 0 28 28"><circle cx="14" cy="14" r="14" fill="#fbc83c" /><path d="M14 14L1.900 7A14 14 0 0126.100 7z" fill="#d9402f" /><path d="M14 7.500h12.400A14 14 0 001.900 7L8.400 17.200z" fill="#d9402f" /><path d="M1.900 7A14 14 0 0014 28l5.600-10.800L14 20.500 8.400 17.200z" fill="#28a14d" /><circle cx="14" cy="14" r="6.500" fill="#fff" /><circle cx="14" cy="14" r="5.200" fill="#4386ef" /></svg>
        <span class="mt-auto h-[3px] w-[51px] bg-[#b5dcf9]"></span>
      </button>
      <div class="ml-auto flex items-center">
        <button aria-label="Icônes cachées"><svg class="h-[10px] w-4" viewBox="0 0 16 10"><path d="M.5 9L8 1.500 15.500 9" fill="none" stroke="#fff" stroke-width="1.500" /></svg></button>
        <button class="ml-3" aria-label="Batterie"><svg class="h-4 w-5" viewBox="0 0 20 16"><path d="M4 5.500h14.500v8H4" fill="none" stroke="#fff" /><path d="M7 7h10v5H6V9zM19 8h1v3h-1zM0 4h6v3l-2 2v5H3V9L0 7zM1 1h1v3H1zM4 1h1v3H4z" fill="#fff" /></svg></button>
        <button class="ml-[10px]" aria-label="Réseau"><svg class="h-4 w-5" viewBox="0 0 20 16" fill="none" stroke="#fff"><path d="M5 .5h14.500v11H2.500V5M11 12v3M7 15.500h8M.5.500h4v4h-4zM2.500 2v2" /></svg></button>
        <button class="ml-[10px]" aria-label="Volume"><svg class="h-[18px] w-5" viewBox="0 0 20 18" fill="none" stroke="#fff" stroke-width="1.200"><path d="M.6 6.500h2.900L7 3v12l-3.500-3.500H.6zM10 6.500q2 2.500 0 5M13 4.500q3.500 4.500 0 9M16 2q5.500 7 0 14" /></svg></button>
        <time class="ml-[14px] text-center leading-[23px]">13:56<br />17/01/2020</time>
        <button class="ml-6" aria-label="Notifications"><svg class="h-5 w-5" viewBox="0 0 20 20"><path d="M0 0h20v16H8l-4 4v-4H0z" fill="#fff" /><path d="M4 4.500h12M4 8.500h12M4 12.500h7" stroke="#222220" stroke-width="1.200" /><path d="M16 9.500c1.500 4-.5 6.500-4.500 6 2 4 8.500 3.500 8.500-2 0-2-2-4-4-4z" fill="#fff" stroke="#222220" stroke-width="1.200" /></svg></button>
        <button class="ml-[26px] h-[50px] w-[5px] border-l border-[#777]" aria-label="Afficher le bureau"></button>
      </div>
    </footer>
  </body>
</html>
